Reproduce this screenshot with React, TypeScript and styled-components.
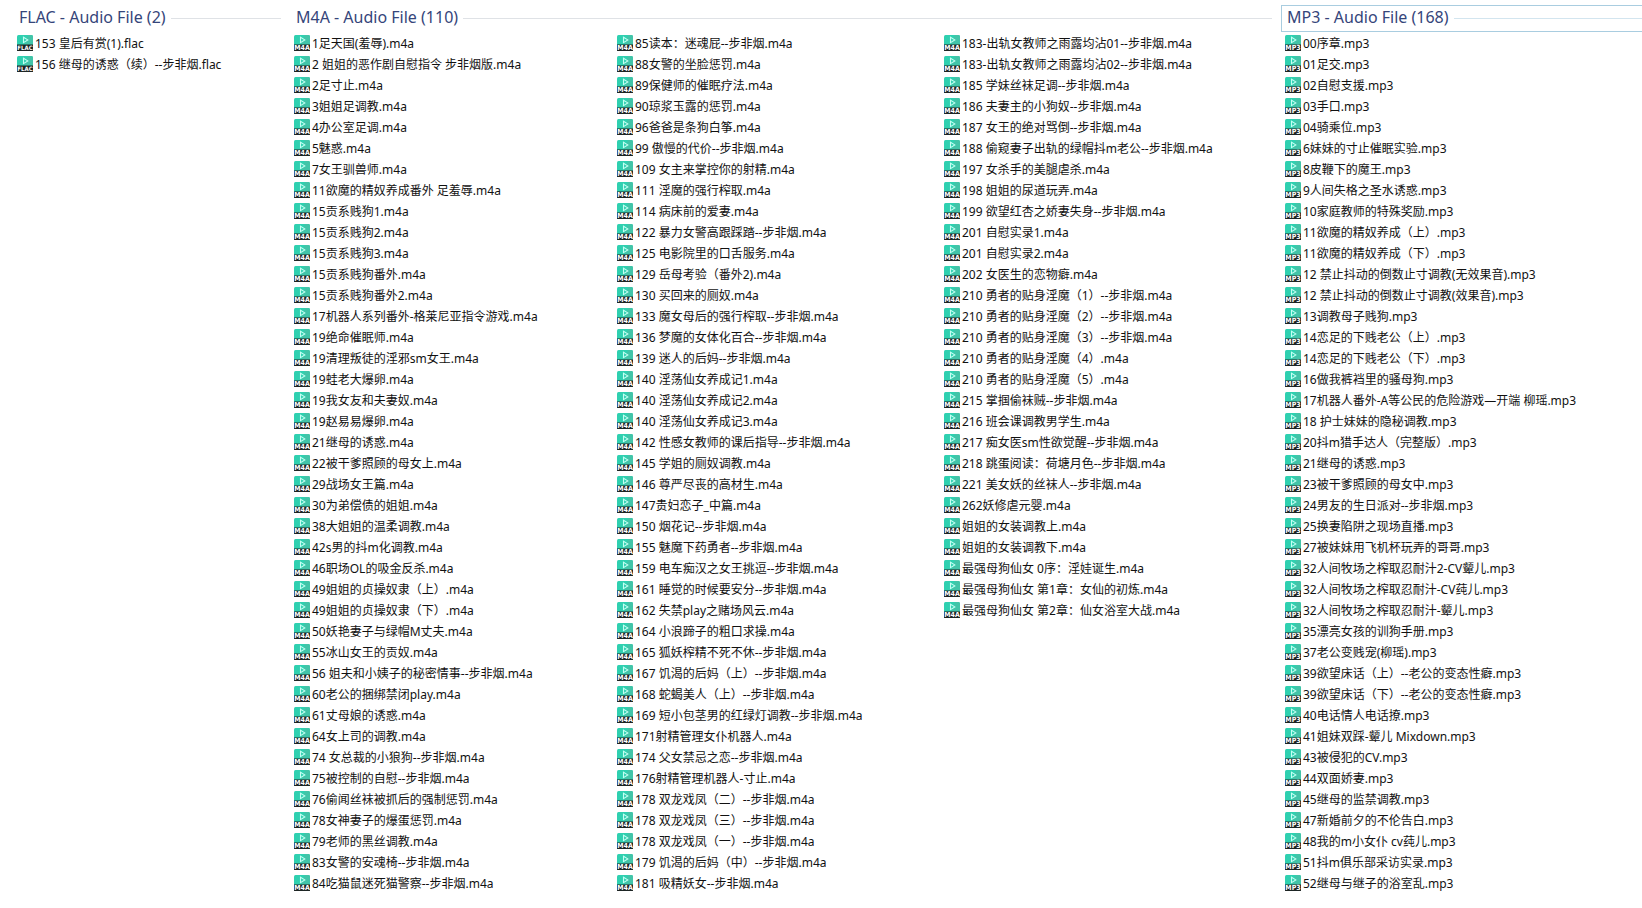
import React from "react";
import styled, { createGlobalStyle } from "styled-components";

const GlobalStyle = createGlobalStyle`
  body {
    margin: 0;
    background: #ffffff;
    color: #111111;
    font-family: "Noto Sans", "Noto Sans CJK SC", sans-serif;
    font-size: 12px;
  }
`;

const Explorer = styled.main`
  display: grid;
  grid-template-columns:
    minmax(max-content, 277fr) minmax(max-content, 991fr) minmax(max-content, 361fr);
  align-items: start;
  padding: 5px 0 14px 13px;
  overflow: hidden;
`;

const Group = styled.section`
  min-width: 0;
`;

const GroupHeader = styled.header<{ $focused?: boolean }>`
  box-sizing: border-box;
  display: flex;
  align-items: center;
  gap: 5px;
  height: 27px;
  margin-bottom: 1px;
  padding: 0 8px 0 5px;
  border: 1px solid ${(p) => (p.$focused ? "#a9cde0" : "transparent")};
  ${(p) => (p.$focused ? "border-right: 0; padding-right: 0;" : "")}

  &::after {
    content: "";
    flex: 1;
    height: 1px;
    background: ${(p) => (p.$focused ? "#d3e5ef" : "#dfe2e6")};
  }
`;

const GroupTitle = styled.h2`
  margin: 0;
  padding-bottom: 2px;
  font-size: 16px;
  font-weight: 400;
  line-height: 23px;
  color: #35457a;
  white-space: nowrap;
`;

const Columns = styled.div<{ $tracks: string }>`
  display: grid;
  grid-template-columns: ${(p) => p.$tracks};
  align-items: start;
`;

const FileList = styled.ul`
  margin: 0;
  padding: 0 0 0 4px;
  list-style: none;
`;

const FileRow = styled.li`
  display: flex;
  gap: 2px;
  height: 21px;
  line-height: 21px;
  white-space: pre;
`;

const IconArt = styled.svg`
  flex: none;
  width: 16px;
  height: 16px;
  margin-top: 2px;
`;

const IconLabel = styled.text`
  font-family: "DejaVu Sans Condensed", "DejaVu Sans", sans-serif;
  font-weight: 700;
  fill: #ffffff;
  text-anchor: middle;
`;

function FileIcon({ kind }: { kind: string }) {
  return (
    <IconArt viewBox="0 0 16 16" aria-hidden="true">
      <path d="M0 11V1.5Q0 0 1.5 0H14.5Q16 0 16 1.5V11Z" fill="#2fd0b0" />
      <path d="M11 0H14.5Q16 0 16 1.5V10H7Z" fill="#42c4a8" />
      <path d="M6.5 2.2L10.8 4.9L6.5 7.6Z" fill="none" stroke="#c4fff3" strokeWidth="1.1" />
      <path d="M0 9.5H16V15.5Q16 16 15.5 16H0.5Q0 16 0 15.5Z" fill="#1d2524" />
      <IconLabel x="8" y="15" fontSize={kind.length > 3 ? 6 : 7}>
        {kind}
      </IconLabel>
    </IconArt>
  );
}

const flac = `153 皇后有赏(1)
156 继母的诱惑（续）--步非烟`;

const m4aFirst = `1足天国(羞辱)
2 姐姐的恶作剧自慰指令 步非烟版
2足寸止
3姐姐足调教
4办公室足调
5魅惑
7女王驯兽师
11欲魔的精奴养成番外 足羞辱
15贡系贱狗1
15贡系贱狗2
15贡系贱狗3
15贡系贱狗番外
15贡系贱狗番外2
17机器人系列番外-格莱尼亚指令游戏
19绝命催眠师
19清理叛徒的淫邪sm女王
19蛙老大爆卵
19我女友和夫妻奴
19赵易易爆卵
21继母的诱惑
22被干爹照顾的母女上
29战场女王篇
30为弟偿债的姐姐
38大姐姐的温柔调教
42s男的抖m化调教
46职场OL的吸金反杀
49姐姐的贞操奴隶（上）
49姐姐的贞操奴隶（下）
50妖艳妻子与绿帽M丈夫
55冰山女王的贡奴
56 姐夫和小姨子的秘密情事--步非烟
60老公的捆绑禁闭play
61丈母娘的诱惑
64女上司的调教
74 女总裁的小狼狗--步非烟
75被控制的自慰--步非烟
76偷闻丝袜被抓后的强制惩罚
78女神妻子的爆蛋惩罚
79老师的黑丝调教
83女警的安魂椅--步非烟
84吃猫鼠迷死猫警察--步非烟`;

const m4aSecond = `85读本：迷魂屁--步非烟
88女警的坐脸惩罚
89保健师的催眠疗法
90琼浆玉露的惩罚
96爸爸是条狗白筝
99 傲慢的代价--步非烟
109 女主来掌控你的射精
111 淫魔的强行榨取
114 病床前的爱妻
122 暴力女警高跟踩踏--步非烟
125 电影院里的口舌服务
129 岳母考验（番外2)
130 买回来的厕奴
133 魔女母后的强行榨取--步非烟
136 梦魔的女体化百合--步非烟
139 迷人的后妈--步非烟
140 淫荡仙女养成记1
140 淫荡仙女养成记2
140 淫荡仙女养成记3
142 性感女教师的课后指导--步非烟
145 学姐的厕奴调教
146 尊严尽丧的高材生
147贵妇恋子_中篇
150 烟花记--步非烟
155 魅魔下药勇者--步非烟
159 电车痴汉之女王挑逗--步非烟
161 睡觉的时候要安分--步非烟
162 失禁play之赌场风云
164 小浪蹄子的粗口求操
165 狐妖榨精不死不休--步非烟
167 饥渴的后妈（上）--步非烟
168 蛇蝎美人（上）--步非烟
169 短小包茎男的红绿灯调教--步非烟
171射精管理女仆机器人
174 父女禁忌之恋--步非烟
176射精管理机器人-寸止
178 双龙戏凤（二）--步非烟
178 双龙戏凤（三）--步非烟
178 双龙戏凤（一）--步非烟
179 饥渴的后妈（中）--步非烟
181 吸精妖女--步非烟`;

const m4aThird = `183-出轨女教师之雨露均沾01--步非烟
183-出轨女教师之雨露均沾02--步非烟
185 学妹丝袜足调--步非烟
186 夫妻主的小狗奴--步非烟
187 女王的绝对骂倒--步非烟
188 偷窥妻子出轨的绿帽抖m老公--步非烟
197 女杀手的美腿虐杀
198 姐姐的尿道玩弄
199 欲望红杏之娇妻失身--步非烟
201 自慰实录1
201 自慰实录2
202 女医生的恋物癖
210 勇者的贴身淫魔（1）--步非烟
210 勇者的贴身淫魔（2）--步非烟
210 勇者的贴身淫魔（3）--步非烟
210 勇者的贴身淫魔（4）
210 勇者的贴身淫魔（5）
215 掌掴偷袜贼--步非烟
216 班会课调教男学生
217 痴女医sm性欲觉醒--步非烟
218 跳蛋阅读：荷塘月色--步非烟
221 美女妖的丝袜人--步非烟
262妖修虐元婴
姐姐的女装调教上
姐姐的女装调教下
最强母狗仙女 0序：淫娃诞生
最强母狗仙女 第1章：女仙的初炼
最强母狗仙女 第2章：仙女浴室大战`;

const mp3 = `00序章
01足交
02自慰支援
03手口
04骑乘位
6妹妹的寸止催眠实验
8皮鞭下的魔王
9人间失格之圣水诱惑
10家庭教师的特殊奖励
11欲魔的精奴养成（上）
11欲魔的精奴养成（下）
12 禁止抖动的倒数止寸调教(无效果音)
12 禁止抖动的倒数止寸调教(效果音)
13调教母子贱狗
14恋足的下贱老公（上）
14恋足的下贱老公（下）
16做我裤裆里的骚母狗
17机器人番外-A等公民的危险游戏—开端 柳瑶
18 护士妹妹的隐秘调教
20抖m猎手达人（完整版）
21继母的诱惑
23被干爹照顾的母女中
24男友的生日派对--步非烟
25换妻陷阱之现场直播
27被妹妹用飞机杯玩弄的哥哥
32人间牧场之榨取忍耐汁2-CV颦儿
32人间牧场之榨取忍耐汁-CV莼儿
32人间牧场之榨取忍耐汁-颦儿
35漂亮女孩的训狗手册
37老公变贱宠(柳瑶)
39欲望床话（上）--老公的变态性癖
39欲望床话（下）--老公的变态性癖
40电话情人电话撩
41姐妹双踩-颦儿 Mixdown
43被侵犯的CV
44双面娇妻
45继母的监禁调教
47新婚前夕的不伦告白
48我的m小女仆 cv莼儿
51抖m俱乐部采访实录
52继母与继子的浴室乱`;

interface GroupData {
  kind: string;
  count: number;
  tracks: string;
  columns: string[];
  focused?: boolean;
}

const groups: GroupData[] = [
  { kind: "FLAC", count: 2, tracks: "1fr", columns: [flac] },
  {
    kind: "M4A",
    count: 110,
    tracks: "323fr 327fr 341fr",
    columns: [m4aFirst, m4aSecond, m4aThird],
  },
  { kind: "MP3", count: 168, tracks: "1fr", columns: [mp3], focused: true },
];

export default function App() {
  return (
    <>
      <GlobalStyle />
      <Explorer lang="zh-CN">
        {groups.map((group) => (
          <Group key={group.kind}>
            <GroupHeader $focused={group.focused}>
              <GroupTitle>
                {`${group.kind} - Audio File (${group.count})`}
              </GroupTitle>
            </GroupHeader>
            <Columns $tracks={group.tracks}>
              {group.columns.map((names, index) => (
                <FileList key={index}>
                  {names.split("\n").map((name) => (
                    <FileRow key={name}>
                      <FileIcon kind={group.kind} />
                      <span>{`${name}.${group.kind.toLowerCase()}`}</span>
                    </FileRow>
                  ))}
                </FileList>
              ))}
            </Columns>
          </Group>
        ))}
      </Explorer>
    </>
  );
}
